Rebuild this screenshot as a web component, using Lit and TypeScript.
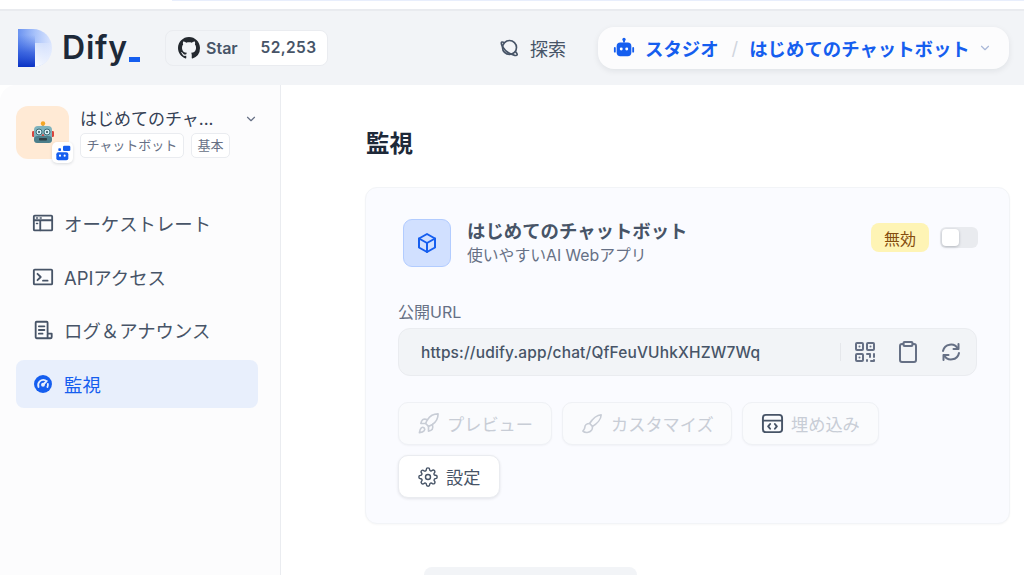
import { LitElement, html, css, svg } from "lit";
import { customElement } from "lit/decorators.js";

const ic = (size: number, body: unknown, sw = 2) => html`<svg width=${size} height=${size} viewBox="0 0 24 24" fill="none" stroke="currentColor" stroke-width=${sw} stroke-linecap="round" stroke-linejoin="round">${body}</svg>`;

const robot = html`<svg width="24" height="24" viewBox="0 0 24 24"><rect x="1" y="10" width="3" height="6" rx="1.2" fill="#d8453e"/><rect x="20" y="10" width="3" height="6" rx="1.2" fill="#d8453e"/><rect x="11" y="2.5" width="2" height="3" fill="#9aa8ae"/><circle cx="12" cy="2.5" r="2.2" fill="#f5a623"/><rect x="3" y="5" width="18" height="17" rx="4" fill="#7fb3bd"/><rect x="3" y="15" width="18" height="7" rx="3.5" fill="#4c7f8b"/><circle cx="8" cy="11" r="3" fill="#d7f1f7" stroke="#3d6b76"/><circle cx="16" cy="11" r="3" fill="#d7f1f7" stroke="#3d6b76"/><circle cx="8" cy="11" r="1" fill="#2a4a52"/><circle cx="16" cy="11" r="1" fill="#2a4a52"/><path d="M12 12.5l1.5 2.5h-3z" fill="#d8453e"/><rect x="8" y="17" width="8" height="2.5" rx=".8" fill="#2f3e44"/></svg>`;

const botFill = html`<svg width="22" height="22" viewBox="0 0 24 24" fill="currentColor"><rect x="11" y="2" width="2" height="4"/><circle cx="12" cy="2.6" r="1.8"/><rect x="4" y="6" width="16" height="15" rx="4"/><rect x="1" y="11" width="2" height="6" rx="1"/><rect x="21" y="11" width="2" height="6" rx="1"/><circle cx="9" cy="13" r="1.6" fill="#fff"/><circle cx="15" cy="13" r="1.6" fill="#fff"/></svg>`;

@customElement("app-root")
export class AppRoot extends LitElement {
  static styles = css`
    :host { display: block; width: 1024px; height: 575px; overflow: hidden; background: #fff; font-family: Inter, "Noto Sans CJK JP", sans-serif; color: #354052; }
    * { box-sizing: border-box; }
    svg { flex-shrink: 0; }
    .strip { height: 11px; background: #fff; border-bottom: 2px solid #e9ebef; display: flex; padding-left: 172px; }
    .strip i { display: block; flex: 1; height: 1px; background: #e8eefc; }
    .header { height: 74px; background: #f2f4f7; display: flex; align-items: center; padding: 0 15px 1px 18px; }
    .logo { display: flex; align-items: center; gap: 10px; width: 147px; }
    .logo svg { display: block; }
    .word { font-size: 32px; font-weight: 600; color: #1d2939; line-height: 38px; letter-spacing: .8px; white-space: nowrap; }
    .word b { display: inline-block; width: 11px; height: 5px; background: #155eef; margin-left: 1px; vertical-align: -3px; }
    .gh { display: flex; height: 36px; width: 163px; border: 1px solid #eaecf0; border-radius: 8px; overflow: hidden; font-weight: 600; color: #475467; }
    .gh .l { width: 84px; display: flex; align-items: center; gap: 6px; padding-left: 12px; font-size: 16px; }
    .gh .r { flex: 1; background: #fff; display: flex; align-items: center; justify-content: center; letter-spacing: .4px; font-size: 15.5px; }
    .explore { display: flex; align-items: center; gap: 10px; margin-left: 171px; width: 99px; font-size: 18px; color: #475467; }
    .studio { display: flex; align-items: center; width: 411px; height: 42px; border-radius: 16px; background: #fcfcfd; box-shadow: 0 2px 6px rgba(16,24,40,.08); color: #155eef; font-weight: 700; font-size: 18.4px; padding-left: 15px; white-space: nowrap; }
    .studio .t1 { margin-left: 10px; }
    .studio .sl { color: #d0d5dd; font-weight: 400; margin: 0 11px 0 13px; }
    .studio .ch { color: #a9b8d8; margin-left: 8px; display: flex; }
    .body { display: flex; height: 490px; }
    .side { width: 281px; background: #fcfcfd; border-right: 1px solid #eaecf0; border-top-left-radius: 16px; padding: 21px 22px 0 16px; }
    .app { display: flex; gap: 11px; height: 54px; }
    .avatar { position: relative; width: 53px; height: 53px; border-radius: 12px; background: #ffead5; display: flex; align-items: center; justify-content: center; }
    .badge { position: absolute; right: -4px; bottom: -4px; width: 21px; height: 21px; border-radius: 5px; background: #fff; box-shadow: 0 1px 3px rgba(16,24,40,.15); color: #155eef; display: flex; align-items: center; justify-content: center; }
    .info { flex: 1; min-width: 0; }
    .name { display: flex; justify-content: space-between; align-items: center; font-size: 17px; line-height: 24px; color: #344054; height: 26px; }
    .name .ch { display: flex; color: #667085; }
    .tags { display: flex; gap: 7px; margin-top: 1px; }
    .tag { height: 25px; border: 1px solid #eaecf0; border-radius: 5px; background: #fff; padding: 0 5.5px; font-size: 13px; line-height: 23px; color: #667085; white-space: nowrap; }
    nav { margin-top: 39px; display: flex; flex-direction: column; gap: 5.5px; }
    .item { display: flex; align-items: center; gap: 10px; height: 48px; border-radius: 8px; padding: 0 0 0 16px; font-size: 18.4px; color: #475467; }
    .item.on { background: #e8effc; color: #155eef; }
    .main { flex: 1; padding: 43px 14px 0 84px; position: relative; }
    h1 { margin: 0 0 0 1px; font-size: 23.5px; line-height: 32px; font-weight: 700; color: #1d2939; }
    .card { margin-top: 27px; height: 337px; border: 1px solid #f2f4f7; border-radius: 12px; background: #fafbff; padding: 31px 32px 0 32px; box-shadow: 0 1px 2px rgba(16,24,40,.03); }
    .top { display: flex; align-items: flex-start; height: 48px; padding-left: 5px; margin-right: -1px; }
    .cube { width: 48px; height: 48px; border-radius: 9px; background: #d1e0ff; border: 1px solid #b2ccff; color: #155eef; display: flex; align-items: center; justify-content: center; }
    .ttl { margin-left: 16px; flex: 1; }
    .ttl .a { font-size: 18.4px; font-weight: 700; line-height: 25px; color: #475467; }
    .ttl .b { font-size: 15.8px; line-height: 22px; margin-top: 1px; color: #667085; }
    .state { margin-top: 4px; height: 29px; width: 58px; border-radius: 8px; background: #fef4b5; color: #854d0e; font-size: 16px; display: flex; align-items: center; justify-content: center; }
    .switch { margin: 8px 0 0 11px; width: 38px; height: 21px; border-radius: 6px; background: #e9ebef; padding: 2px; }
    .switch i { display: block; width: 17px; height: 17px; border-radius: 4px; background: #fff; box-shadow: 0 1px 3px rgba(16,24,40,.25); }
    .lbl { margin-top: 34px; font-size: 16px; line-height: 22px; color: #667085; }
    .url { margin-top: 5px; height: 48px; border: 1px solid #eaecf0; border-radius: 12px; background: #f2f4f7; display: flex; align-items: center; padding-left: 22px; color: #475467; font-size: 15.5px; font-weight: 500; }
    .url .u { flex: 1; letter-spacing: .15px; }
    .url .div { width: 1px; height: 18px; background: #e5e7eb; }
    .url .ics { display: flex; gap: 19px; color: #667085; margin: 0 13px 0 12px; }
    .btns { display: flex; flex-wrap: wrap; gap: 10px; margin-top: 26px; }
    .btn { height: 43px; border-radius: 10px; border: 1px solid #eff1f5; padding: 0 18px; display: flex; align-items: center; gap: 7px; font-size: 17.2px; color: #c8cdd6; background: #fafbfd; box-shadow: 0 1px 2px rgba(16,24,40,.04); white-space: nowrap; }
    .btn.w1 { width: 154px; } .btn.w2 { width: 170px; } .btn.w3 { width: 137px; }
    .btn .dark { color: #475467; display: flex; }
    .btn.act { width: 102px; padding: 0 19px; gap: 8px; background: #fff; color: #475467; border-color: #eaecf0; box-shadow: 0 1px 3px rgba(16,24,40,.1); }
    .ghost { position: absolute; left: 143px; top: 482px; width: 213px; height: 20px; background: #f2f4f7; border-radius: 8px 8px 0 0; }
  `;

  render() {
    return html`
      <div class="strip"><i></i></div>
      <div class="header">
        <div class="logo">
          <svg width="34" height="38" viewBox="0 0 34 38">
            <defs>
              <linearGradient id="lg" x1="0" y1="0" x2="1" y2="0"><stop offset="0" stop-color="#6a92f0"/><stop offset=".5" stop-color="#a8c2fa"/><stop offset="1" stop-color="#dce6fe"/></linearGradient>
              <linearGradient id="lb" x1="0" y1="0" x2="0" y2="1"><stop offset="0" stop-color="#2f5fe0" stop-opacity="0"/><stop offset=".55" stop-color="#2450d8" stop-opacity=".75"/><stop offset="1" stop-color="#0a32c4"/></linearGradient>
              <linearGradient id="lw" x1="0" y1="1" x2="1" y2="0"><stop offset="0" stop-color="#fff"/><stop offset=".55" stop-color="#fff" stop-opacity=".5"/><stop offset="1" stop-color="#fff" stop-opacity="0"/></linearGradient>
              <clipPath id="dc"><path d="M0 0h15a19 19 0 0 1 0 38H0z"/></clipPath>
            </defs>
            <g clip-path="url(#dc)">
              <rect width="34" height="38" fill="url(#lg)"/>
              <rect x="17" y="14" width="17" height="24" fill="url(#lw)"/>
              <rect y="6" width="17" height="32" fill="url(#lb)"/>
            </g>
          </svg>
          <span class="word">Dify<b></b></span>
        </div>
        <div class="gh">
          <div class="l"><svg width="22" height="22" viewBox="0 0 16 16" fill="#24292f"><path d="M8 0C3.58 0 0 3.58 0 8c0 3.54 2.29 6.53 5.47 7.59.4.07.55-.17.55-.38 0-.19-.01-.82-.01-1.49-2.01.37-2.53-.49-2.69-.94-.09-.23-.48-.94-.82-1.13-.28-.15-.68-.52-.01-.53.63-.01 1.08.58 1.23.82.72 1.21 1.87.87 2.33.66.07-.52.28-.87.51-1.07-1.78-.2-3.64-.89-3.64-3.95 0-.87.31-1.59.82-2.15-.08-.2-.36-1.02.08-2.12 0 0 .67-.21 2.2.82.64-.18 1.32-.27 2-.27s1.36.09 2 .27c1.53-1.04 2.2-.82 2.2-.82.44 1.1.16 1.92.08 2.12.51.56.82 1.27.82 2.15 0 3.07-1.87 3.75-3.65 3.95.29.25.54.73.54 1.48 0 1.07-.01 1.93-.01 2.2 0 .21.15.46.55.38A8.01 8.01 0 0 0 16 8c0-4.42-3.58-8-8-8z"/></svg>Star</div>
          <div class="r">52,253</div>
        </div>
        <div class="explore">
          ${ic(21, svg`<circle cx="12" cy="12" r="8"/><path d="M5 6c-3-1-3 1-1 5 3 5 9 9 14 10 3 .5 4-1 1-4"/>`, 1.9)}
          <span>探索</span>
        </div>
        <div class="studio">
          ${botFill}
          <span class="t1">スタジオ</span><span class="sl">/</span><span>はじめてのチャットボット</span>
          <span class="ch">${ic(14, svg`<path d="M6 9l6 6 6-6"/>`)}</span>
        </div>
      </div>
      <div class="body">
        <aside class="side">
          <div class="app">
            <div class="avatar">${robot}
              <div class="badge"><svg width="16" height="16" viewBox="0 0 24 24" fill="currentColor"><rect x="12" y="1" width="11" height="8" rx="2"/><rect x="2" y="11" width="18" height="12" rx="3"/><rect x="5" y="5" width="4" height="4" rx="1"/><circle cx="7.5" cy="16" r="1.6" fill="#fff"/><circle cx="14.5" cy="16" r="1.6" fill="#fff"/></svg></div>
            </div>
            <div class="info">
              <div class="name"><span>はじめてのチャ...</span><span class="ch">${ic(14, svg`<path d="M6 9l6 6 6-6"/>`)}</span></div>
              <div class="tags"><span class="tag">チャットボット</span><span class="tag">基本</span></div>
            </div>
          </div>
          <nav>
            <div class="item">${ic(22, svg`<rect x="2" y="4" width="20" height="16" rx="1"/><path d="M2 9h20M9 9v11"/><path d="M5 6.5h1M9 6.5h1M5 12.5h1" stroke-width="1.8"/>`)}<span>オーケストレート</span></div>
            <div class="item">${ic(22, svg`<rect x="2" y="4" width="20" height="16" rx="1"/><path d="M6 8.5l3.5 3.5L6 15.5M12 16h5"/>`)}<span>APIアクセス</span></div>
            <div class="item">${ic(22, svg`<path d="M17 15V4a1 1 0 0 0-1-1H5a1 1 0 0 0-1 1v16a1 1 0 0 0 1 1h15a1.5 1.5 0 0 0 1.5-1.5V16h-4.5v5"/><path d="M7.5 8h6M7.5 12h6M7.5 16h4"/>`)}<span>ログ＆アナウンス</span></div>
            <div class="item on"><svg width="22" height="22" viewBox="-2.7 -2.7 29.4 29.4"><circle cx="12" cy="12" r="12" fill="currentColor"/><path d="M6 16a7 7 0 0 1 9-9" fill="none" stroke="#e8effc" stroke-width="2.4" stroke-linecap="round"/><path d="M18.5 12a7 7 0 0 1-.6 4" fill="none" stroke="#e8effc" stroke-width="2.4" stroke-linecap="round"/><circle cx="12" cy="13" r="2.6" fill="#e8effc"/><path d="M12 13l5-5" stroke="#e8effc" stroke-width="2.4" stroke-linecap="round"/></svg><span>監視</span></div>
          </nav>
        </aside>
        <main class="main">
          <h1>監視</h1>
          <section class="card">
            <div class="top">
              <div class="cube">${ic(24, svg`<path d="M12 3l8 4.5v9L12 21l-8-4.5v-9z"/><path d="M4 7.5l8 4.5 8-4.5M12 12v9"/>`)}</div>
              <div class="ttl"><div class="a">はじめてのチャットボット</div><div class="b">使いやすいAI Webアプリ</div></div>
              <div class="state">無効</div>
              <div class="switch"><i></i></div>
            </div>
            <div class="lbl">公開URL</div>
            <div class="url">
              <span class="u">https://udify.app/chat/QfFeuVUhkXHZW7Wq</span>
              <span class="div"></span>
              <span class="ics">
                ${ic(24, svg`<rect x="3" y="3" width="7" height="7" rx="1"/><rect x="14" y="3" width="7" height="7" rx="1"/><rect x="3" y="14" width="7" height="7" rx="1"/><path d="M14 14h3v3M21 14v3M14 21v-1M18 21h3v-1"/><path d="M6.5 6.5h0M17.5 6.5h0M6.5 17.5h0"/>`)}
                ${ic(24, svg`<path d="M7.5 4H6a2 2 0 0 0-2 2v14a2 2 0 0 0 2 2h12a2 2 0 0 0 2-2V6a2 2 0 0 0-2-2h-1.5"/><rect x="7.5" y="2" width="9" height="4" rx="1"/>`)}
                ${ic(24, svg`<path d="M19.5 4v5h-5M4.5 20v-5h5"/><path d="M4 11a8 8 0 0 1 15-2M20 13a8 8 0 0 1-15 2"/>`)}
              </span>
            </div>
            <div class="btns">
              <div class="btn w1">${ic(23, svg`<path d="M4.5 16.5c-1.5 1.3-2 5-2 5s3.7-.5 5-2c.7-.8.7-2.1-.1-2.9a2.2 2.2 0 0 0-2.9-.1z"/><path d="M12 15l-3-3a22 22 0 0 1 2-4A12.9 12.9 0 0 1 22 2c0 2.7-.8 7.5-6 11a22 22 0 0 1-4 2z"/><path d="M9 12H4s.6-3 2-4c1.6-1.1 5 0 5 0M12 15v5s3-.6 4-2c1.1-1.6 0-5 0-5"/>`, 1.7)}<span>プレビュー</span></div>
              <div class="btn w2">${ic(23, svg`<path d="M21 3c-4 0-9 4-12 9l3 3c5-3 9-8 9-12z"/><path d="M9 12c-3 0-5 2-5 4 0 2-1 3-2 4 2 2 7 2 9-1 1-1 1-3 1-4"/>`, 1.7)}<span>カスタマイズ</span></div>
              <div class="btn w3"><span class="dark">${ic(23, svg`<rect x="2" y="3" width="20" height="18" rx="3"/><path d="M2 9h20M9.5 12.5L7.5 15l2 2.5M14.5 12.5l2 2.5-2 2.5"/>`)}</span><span>埋め込み</span></div>
              <div class="btn act">${ic(20, svg`<circle cx="12" cy="12" r="3"/><path d="M19.4 15a1.65 1.65 0 0 0 .33 1.82l.06.06a2 2 0 1 1-2.83 2.83l-.06-.06a1.65 1.65 0 0 0-2.82 1.17V21a2 2 0 1 1-4 0v-.09A1.65 1.65 0 0 0 7.27 19.7l-.06.06a2 2 0 1 1-2.83-2.83l.06-.06a1.65 1.65 0 0 0-1.17-2.82H3a2 2 0 1 1 0-4h.09A1.65 1.65 0 0 0 4.3 7.27l-.06-.06a2 2 0 1 1 2.83-2.83l.06.06a1.65 1.65 0 0 0 2.82-1.17V3a2 2 0 1 1 4 0v.09a1.65 1.65 0 0 0 2.82 1.17l.06-.06a2 2 0 1 1 2.83 2.83l-.06.06a1.65 1.65 0 0 0 1.17 2.82H21a2 2 0 1 1 0 4h-.09A1.65 1.65 0 0 0 19.4 15z"/>`, 1.7)}<span>設定</span></div>
            </div>
          </section>
          <div class="ghost"></div>
        </main>
      </div>
    `;
  }
}
